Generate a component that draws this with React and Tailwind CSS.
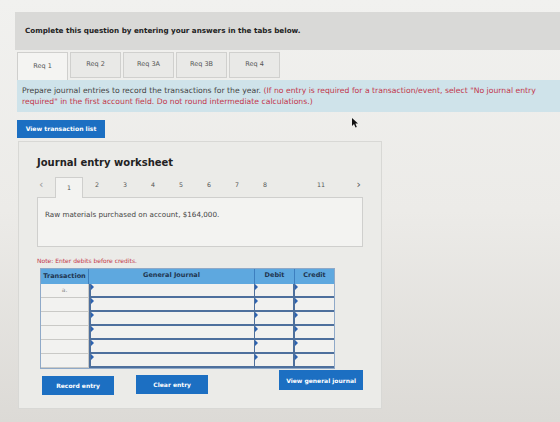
import React from 'react';

const tabs = ['Req 1', 'Req 2', 'Req 3A', 'Req 3B', 'Req 4'];
const steps = ['2', '3', '4', '5', '6', '7', '8'];
const rows = ['a.', '', '', '', '', ''];

const Marker = () => (
  <span className="absolute left-0 top-0 w-0 h-0 border-t-[3px] border-b-[3px] border-l-[3px] border-t-transparent border-b-transparent border-l-[#2c62b0]" />
);

const App = () => {
  return (
    <div
      className="relative w-[560px] h-[422px] overflow-hidden bg-gradient-to-b from-[#f1f1ef] via-[#ecebe8] to-[#dcdad6] text-[#333] pt-[12px]"
      style={{ fontFamily: '"DejaVu Sans", Verdana, sans-serif' }}
    >
      {/* Header */}
      <div className="ml-[15px] h-[38px] bg-[#d9d9d7] flex items-center pl-[10px] text-[7.2px] font-bold text-[#222]">
        Complete this question by entering your answers in the tabs below.
      </div>

      {/* Tabs */}
      <div className="ml-[17px] mt-[2px] flex h-[28px] items-end gap-[2px]">
        {tabs.map((tab, i) => (
          <div
            key={tab}
            className={
              i === 0
                ? 'w-[51px] h-[28px] bg-[#f4f4f2] border border-[#cfcfcd] border-b-0 flex items-center justify-center text-[6.5px] text-[#555]'
                : 'w-[51px] h-[26px] bg-[#e9e9e7] border border-[#d0d0ce] flex items-center justify-center text-[6.5px] text-[#555] mb-[2px]'
            }
          >
            {tab}
          </div>
        ))}
      </div>

      {/* Instructions */}
      <div className="ml-[17px] h-[32px] bg-[#cfe3ea] px-[5px] pt-[5px] text-[7.7px] leading-[11px] whitespace-nowrap">
        <div>
          <span className="text-[#444]">Prepare journal entries to record the transactions for the year. </span>
          <span className="text-[#c2364a]">(If no entry is required for a transaction/event, select "No journal entry</span>
        </div>
        <div className="text-[#c2364a]">required" in the first account field. Do not round intermediate calculations.)</div>
      </div>

      <button className="ml-[17px] mt-[8px] w-[88px] h-[18px] bg-[#1c6fc2] text-white text-[6.1px] font-bold flex items-center justify-center">
        View transaction list
      </button>

      {/* Worksheet panel */}
      <div className="ml-[18px] mt-[3px] w-[364px] h-[268px] bg-[#ebebe8] border border-[#d8d8d5] px-[18px] pt-[13px]">
        <div className="text-[10px] font-bold text-[#222]">Journal entry worksheet</div>

        <div className="mt-[6px] flex items-end h-[21px] text-[6.3px] text-[#555]">
          <span className="w-[18px] pb-[7px] pl-[2px] text-[11px] leading-none text-[#999]">‹</span>
          <div className="w-[28px] h-[21px] bg-[#f3f3f1] border border-[#cfcfcd] border-b-0 flex items-center justify-center -mb-px relative z-10">1</div>
          {steps.map((s) => (
            <span key={s} className="w-[28px] pb-[8px] text-center">{s}</span>
          ))}
          <span className="w-[46px] pb-[8px] text-right">11</span>
          <span className="ml-auto pb-[7px] pr-[2px] text-[11px] leading-none text-[#555]">›</span>
        </div>

        <div className="w-[326px] h-[50px] bg-[#f3f3f1] border border-[#cfcfcd] px-[7px] pt-[12px] text-[7.2px] text-[#444]">
          Raw materials purchased on account, $164,000.
        </div>

        <div className="mt-[9px] text-[6px] text-[#c2364a]">Note: Enter debits before credits.</div>

        {/* Table */}
        <div className="mt-[3px] ml-[3px] w-[295px] border border-[#8fa9c8]">
          <div className="flex h-[15px] bg-[#5ea8df] text-[6.5px] font-bold text-[#1f3550]">
            <div className="w-[48px] flex items-end justify-center pb-[2px] border-r border-[#3d7fbf]">Transaction</div>
            <div className="w-[166px] flex items-start justify-center pt-[2px] border-r border-[#3d7fbf]">General Journal</div>
            <div className="w-[40px] flex items-start justify-center pt-[2px] border-r border-[#3d7fbf]">Debit</div>
            <div className="flex-1 flex items-start justify-center pt-[2px]">Credit</div>
          </div>
          {rows.map((r, i) => (
            <div key={i} className="flex h-[14px]">
              <div className="w-[48px] bg-[#f2f2f0] border-r border-b border-[#c9c9c6] flex items-start justify-center pt-px text-[6px] text-[#888]">
                {r}
              </div>
              <div className="relative w-[166px] bg-[#f1f1ef] border-2 border-[#4d6f9c] border-t-0 border-r">
                <Marker />
              </div>
              <div className="relative w-[40px] bg-[#f1f1ef] border-b-2 border-r-2 border-[#4d6f9c]">
                <Marker />
              </div>
              <div className="relative flex-1 bg-[#f1f1ef] border-b-2 border-[#4d6f9c]">
                <Marker />
              </div>
            </div>
          ))}
        </div>

        {/* Actions */}
        <div className="mt-[1px] flex items-start">
          <button className="ml-[5px] mt-[6px] w-[74px] h-[19px] bg-[#1c6fc2] text-white text-[6px] font-bold flex items-center justify-center">
            Record entry
          </button>
          <button className="ml-[22px] mt-[5px] w-[74px] h-[19px] bg-[#1c6fc2] text-white text-[6px] font-bold flex items-center justify-center">
            Clear entry
          </button>
          <button className="ml-[71px] w-[86px] h-[20px] bg-[#1c6fc2] text-white text-[6px] font-bold flex items-center justify-center">
            View general journal
          </button>
        </div>
      </div>

      {/* Mouse cursor */}
      <svg className="absolute left-[352px] top-[118px]" width="7" height="10" viewBox="0 0 7 10">
        <path d="M0 0 L0 8 L2 6 L3.5 9.5 L4.8 9 L3.4 5.6 L6 5.6 Z" fill="#111" />
      </svg>
    </div>
  );
};

export default App;
